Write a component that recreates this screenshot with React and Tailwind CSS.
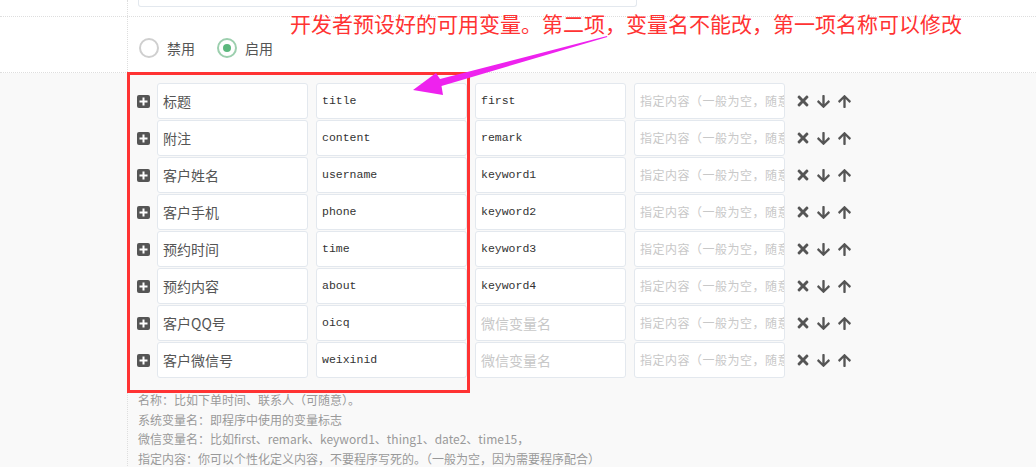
import { FaTimes, FaArrowDown, FaArrowUp } from 'react-icons/fa';

const CJK = '"Noto Sans CJK SC", "Liberation Sans", sans-serif';
const MONO = '"Liberation Mono", "Noto Sans CJK SC", monospace';

const rows = [
  { name: '标题', key: 'title', wx: 'first' },
  { name: '附注', key: 'content', wx: 'remark' },
  { name: '客户姓名', key: 'username', wx: 'keyword1' },
  { name: '客户手机', key: 'phone', wx: 'keyword2' },
  { name: '预约时间', key: 'time', wx: 'keyword3' },
  { name: '预约内容', key: 'about', wx: 'keyword4' },
  { name: '客户QQ号', key: 'oicq', wx: '' },
  { name: '客户微信号', key: 'weixinid', wx: '' },
];

const box = "w-[151px] h-[36px] shrink-0 bg-white border border-[#e3e8ee] rounded-[3px] pl-[5px] flex items-center overflow-hidden whitespace-nowrap";

function PlusBox(){
  return (
    <svg width="13" height="13" viewBox="0 0 13 13" className="shrink-0">
      <rect x="0" y="0" width="13" height="13" rx="2" fill="#555" />
      <rect x="5.5" y="2.5" width="2" height="8" fill="#fff" />
      <rect x="2.5" y="5.5" width="8" height="2" fill="#fff" />
    </svg>
  );
}

function Row({ r }){
  return (
    <div className="flex items-center h-[36px] mb-[1px]">
      <div className="ml-[9px]"><PlusBox/></div>
      <div className={`${box} ml-[7px] text-[14px] text-[#555]`} style={{ fontFamily: CJK }}>{r.name}</div>
      <div className={`${box} ml-[8px] text-[11.5px] text-[#333]`} style={{ fontFamily: MONO }}>{r.key}</div>
      <div className={`${box} ml-[8px]`}>
        {r.wx
          ? <span className="text-[11.5px] text-[#333]" style={{ fontFamily: MONO }}>{r.wx}</span>
          : <span className="text-[14px] text-[#c8c8c8]" style={{ fontFamily: CJK }}>微信变量名</span>}
      </div>
      <div className={`${box} ml-[8px] text-[12px] tracking-[0.5px] text-[#c8c8c8]`} style={{ fontFamily: CJK }}>指定内容（一般为空，随意填写）</div>
      <FaTimes size={16} className="shrink-0 ml-[10px] text-[#555]" />
      <FaArrowDown size={15} className="shrink-0 ml-[5px] text-[#555]" />
      <FaArrowUp size={15} className="shrink-0 ml-[6px] text-[#555]" />
    </div>
  );
}

export default function App(){
  return (
    <div className="relative w-[1036px] min-h-[467px] bg-white overflow-hidden" style={{ fontFamily: CJK }}>
      {/* input row, cut off at top */}
      <div className="flex h-[17px] border-b border-dotted border-[#dedede]">
        <div className="w-[128px] shrink-0 border-r border-dotted border-[#dedede]" />
        <div className="pl-[10px]">
          <div className="w-[499px] h-[7px] border border-t-0 border-[#e3e8ee] rounded-b-[3px]" />
        </div>
      </div>

      {/* radios */}
      <div className="flex h-[56px] border-b border-dotted border-[#dedede]">
        <div className="w-[128px] shrink-0 border-r border-dotted border-[#dedede]" />
        <div className="flex items-center pt-[7px] pl-[11px] text-[14px] text-[#555]">
          <span className="w-[20px] h-[20px] rounded-full border-2 border-[#cfcfcf] bg-white" />
          <span className="ml-[8px]">禁用</span>
          <span className="ml-[22px] w-[20px] h-[20px] rounded-full border-2 border-[#9ccfae] bg-white flex items-center justify-center">
            <span className="w-[8px] h-[8px] rounded-full bg-[#5cb87e]" />
          </span>
          <span className="ml-[8px]">启用</span>
        </div>
      </div>

      {/* variables */}
      <div className="flex bg-[#f9f9f9] min-h-[394px]">
        <div className="w-[128px] shrink-0 border-r border-dotted border-[#dedede]" />
        <div className="pt-[10px]">
          {rows.map(r => <Row key={r.key} r={r} />)}
          <div className="mt-[12px] pl-[10px] text-[12px] leading-[19.5px] text-[#999]">
            <div>名称：比如下单时间、联系人（可随意）。</div>
            <div>系统变量名：即程序中使用的变量标志</div>
            <div>微信变量名：比如first、remark、keyword1、thing1、date2、time15，</div>
            <div>指定内容：你可以个性化定义内容，不要程序写死的。（一般为空，因为需要程序配合）</div>
          </div>
        </div>
      </div>

      {/* annotations */}
      <div className="absolute left-[290px] top-[10px] text-[21px] leading-[26px] text-[#ff3333] whitespace-nowrap">
        开发者预设好的可用变量。第二项，变量名不能改，第一项名称可以修改
      </div>
      <div className="absolute left-[127px] top-[72px] w-[343px] h-[321px] border-[3px] border-[#ff3333] pointer-events-none" />
      <svg className="absolute left-0 top-0 pointer-events-none" width="1036" height="467">
        <polygon
          fill="#ee22ee"
          points="607,36 607.3,37 441.5,86 443,95 413,90 436,73 440,79"
        />
      </svg>
    </div>
  );
}
